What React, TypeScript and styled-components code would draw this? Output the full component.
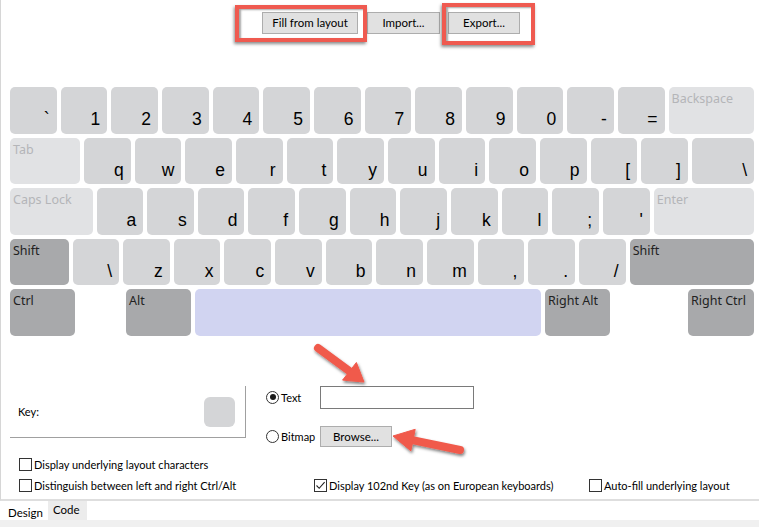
import React from "react";
import styled, { createGlobalStyle, css } from "styled-components";

const Global = createGlobalStyle`
  html, body { margin: 0; padding: 0; background: #ffffff; }
  body { font-family: "Noto Sans", "Open Sans", sans-serif; }
`;

const UI_FONT = `Lato, "Noto Sans", sans-serif`;
const KEY_FONT = `"Noto Sans", "Open Sans", sans-serif`;

const Page = styled.div`
  position: relative;
  width: 759px;
  height: 527px;
  overflow: hidden;
  background: #ffffff;
  display: flex;
  flex-direction: column;
  font-family: ${UI_FONT};
  color: #000;
`;

const Content = styled.div`
  height: 501px;
  border-left: 1px solid #d6d6d6;
  border-bottom: 2px solid #dedede;
  box-sizing: border-box;
  display: flex;
  flex-direction: column;
`;

const Toolbar = styled.div`
  display: flex;
  align-items: flex-start;
  padding: 12px 0 0 261px;
  height: 34px;
  box-sizing: border-box;
`;

const Button = styled.button<{ $w: number; $gap?: number }>`
  width: ${(p) => p.$w}px;
  height: 22px;
  margin-left: ${(p) => p.$gap ?? 0}px;
  background: #e1e1e1;
  border: 1px solid #adadad;
  font-family: ${UI_FONT};
  font-size: 11.5px;
  color: #000;
  padding: 0;
  line-height: 20px;
`;

const Keyboard = styled.div`
  margin-top: 53px;
  padding-left: 9px;
  width: 744px;
  display: flex;
  flex-direction: column;
  gap: 4px;
`;

const Row = styled.div`
  display: flex;
  gap: 4px;
  height: 46.5px;
`;

type Kind = "char" | "special" | "mod" | "space" | "gap";

const Key = styled.div<{ $kind: Kind; $w?: number }>`
  ${(p) => (p.$w ? css`width: ${p.$w}px; flex: none;` : css`flex: 1; min-width: 0;`)}
  border-radius: 5px;
  box-sizing: border-box;
  display: flex;
  flex-direction: column;
  ${(p) =>
    p.$kind === "char"
      ? css`
          background: #d4d5d7;
          justify-content: flex-end;
          align-items: flex-end;
          padding: 0 7px 5px 0;
          font-family: "Liberation Sans", Arial, sans-serif;
          font-size: 17.5px;
          line-height: 1;
          color: #000;
        `
      : css`
          justify-content: flex-start;
          align-items: flex-start;
          padding: 4px 0 0 3px;
          font-family: ${KEY_FONT};
          font-size: 12.5px;
          line-height: 16px;
        `}
  ${(p) => p.$kind === "special" && css`background: #e1e2e4; color: #b4b5b8;`}
  ${(p) => p.$kind === "mod" && css`background: #a8a9ab; color: #222;`}
  ${(p) => p.$kind === "space" && css`background: #d1d4f1;`}
  ${(p) => p.$kind === "gap" && css`background: transparent;`}
`;

const U = 46.67;

type K = { l: string; k: Kind; w?: number };
const chars = (s: string): K[] => s.split("").map((c) => ({ l: c, k: "char", w: U }));

const rows: K[][] = [
  [...chars("`1234567890-="), { l: "Backspace", k: "special" }],
  [{ l: "Tab", k: "special", w: 70 }, ...chars("qwertyuiop[]"), { l: "\\", k: "char" }],
  [{ l: "Caps Lock", k: "special", w: 82.5 }, ...chars("asdfghjkl;'"), { l: "Enter", k: "special" }],
  [{ l: "Shift", k: "mod", w: 58.5 }, ...chars("\\zxcvbnm,./"), { l: "Shift", k: "mod" }],
  [
    { l: "Ctrl", k: "mod", w: 65 },
    { l: "", k: "gap", w: 43 },
    { l: "Alt", k: "mod", w: 65 },
    { l: "", k: "space", w: 346 },
    { l: "Right Alt", k: "mod", w: 65 },
    { l: "", k: "gap", w: 70 },
    { l: "Right Ctrl", k: "mod" },
  ],
];

const Lower = styled.div`
  display: flex;
  margin-top: 50px;
  padding-left: 9px;
`;

const KeyBox = styled.div`
  width: 236px;
  height: 52px;
  box-sizing: border-box;
  border-right: 1px solid #a0a0a0;
  border-bottom: 1px solid #a0a0a0;
  display: flex;
  align-items: center;
  justify-content: space-between;
  padding: 0 10px 0 8px;
`;

const Label = styled.span`
  font-family: ${UI_FONT};
  font-size: 11px;
  color: #000;
  white-space: nowrap;
`;

const KeySwatch = styled.div`
  width: 31px;
  height: 30px;
  border-radius: 6px;
  background: #d4d5d7;
  margin-top: 1px;
`;

const Options = styled.div`
  margin-left: 20px;
  display: grid;
  grid-template-columns: 54px auto;
  grid-template-rows: 23px 21px;
  row-gap: 17px;
  align-items: center;
`;

const RadioLabel = styled.label`
  display: flex;
  align-items: center;
  gap: 2px;
`;

const Radio = styled.span<{ $on?: boolean }>`
  width: 11px;
  height: 11px;
  border: 1px solid #333;
  border-radius: 50%;
  display: flex;
  align-items: center;
  justify-content: center;
  background: #fff;
  &::after {
    content: "";
    width: 6px;
    height: 6px;
    border-radius: 50%;
    background: ${(p) => (p.$on ? "#1a1a1a" : "transparent")};
  }
`;

const TextInput = styled.div`
  width: 154px;
  height: 23px;
  box-sizing: border-box;
  border: 1px solid #7a7a7a;
  background: #fff;
`;

const Browse = styled(Button)`
  height: 21px;
  line-height: 19px;
`;

const Checks = styled.div`
  display: grid;
  grid-template-columns: 295px 275px auto;
  grid-template-rows: 13px 13px;
  row-gap: 8px;
  padding-left: 18px;
  margin-top: 11px;
`;

const CheckItem = styled.label<{ $col: number; $row: number }>`
  grid-column: ${(p) => p.$col};
  grid-row: ${(p) => p.$row};
  display: flex;
  align-items: center;
  gap: 2px;
  height: 13px;
`;

const Box = styled.span`
  width: 13px;
  height: 13px;
  box-sizing: border-box;
  border: 1px solid #333;
  background: #fff;
  display: flex;
  align-items: center;
  justify-content: center;
  flex: none;
`;

const Tabs = styled.div`
  display: flex;
  height: 19px;
`;

const Tab = styled.div<{ $active?: boolean }>`
  height: 19px;
  padding: ${(p) => (p.$active ? "0 0 0 8px" : "0 0 0 5px")};
  width: ${(p) => (p.$active ? "48px" : "39px")};
  box-sizing: border-box;
  background: ${(p) => (p.$active ? "#ffffff" : "#ececec")};
  font-family: ${UI_FONT};
  font-size: 11.5px;
  line-height: ${(p) => (p.$active ? "23px" : "17px")};
`;

const Strip = styled.div`
  flex: 1;
  background: #f0f0f0;
`;

const Highlight = styled.div<{ $x: number; $y: number; $w: number; $h: number }>`
  position: absolute;
  left: ${(p) => p.$x}px;
  top: ${(p) => p.$y}px;
  width: ${(p) => p.$w}px;
  height: ${(p) => p.$h}px;
  box-sizing: border-box;
  border: 4px solid #ef5a50;
  box-shadow: -1px 2px 3px rgba(0, 0, 0, 0.45), inset 2px 1px 2px rgba(0, 0, 0, 0.35);
  pointer-events: none;
`;

const Overlay = styled.svg`
  position: absolute;
  left: 0;
  top: 0;
  pointer-events: none;
`;

function Check({ col, row, on, children }: { col: number; row: number; on?: boolean; children: React.ReactNode }) {
  return (
    <CheckItem $col={col} $row={row}>
      <Box>
        {on && (
          <svg width="11" height="11" viewBox="0 0 11 11">
            <path d="M1.5 5.5 L4.2 8.3 L9.6 2.2" fill="none" stroke="#222" strokeWidth="1.1" />
          </svg>
        )}
      </Box>
      <Label>{children}</Label>
    </CheckItem>
  );
}

export default function App() {
  return (
    <Page>
      <Global />
      <Content>
        <Toolbar>
          <Button $w={96}>Fill from layout</Button>
          <Button $w={73} $gap={9}>Import...</Button>
          <Button $w={72} $gap={8}>Export...</Button>
        </Toolbar>
        <Keyboard>
          {rows.map((r, i) => (
            <Row key={i}>
              {r.map((k, j) => (
                <Key key={j} $kind={k.k} $w={k.w}>
                  {k.l}
                </Key>
              ))}
            </Row>
          ))}
        </Keyboard>
        <Lower>
          <KeyBox>
            <Label>Key:</Label>
            <KeySwatch />
          </KeyBox>
          <Options>
            <RadioLabel>
              <Radio $on />
              <Label>Text</Label>
            </RadioLabel>
            <TextInput />
            <RadioLabel>
              <Radio />
              <Label>Bitmap</Label>
            </RadioLabel>
            <Browse $w={72}>Browse...</Browse>
          </Options>
        </Lower>
        <Checks>
          <Check col={1} row={1}>Display underlying layout characters</Check>
          <Check col={1} row={2}>Distinguish between left and right Ctrl/Alt</Check>
          <Check col={2} row={2} on>Display 102nd Key (as on European keyboards)</Check>
          <Check col={3} row={2}>Auto-fill underlying layout</Check>
        </Checks>
      </Content>
      <Tabs>
        <Tab $active>Design</Tab>
        <Tab>Code</Tab>
      </Tabs>
      <Strip />

      <Highlight $x={235} $y={5} $w={132} $h={37} />
      <Highlight $x={442} $y={3} $w={93} $h={42} />

      <Overlay width="759" height="527" viewBox="0 0 759 527">
        <defs>
          <filter id="sh" x="-20%" y="-20%" width="140%" height="140%">
            <feDropShadow dx="1" dy="2" stdDeviation="1.6" floodColor="#000" floodOpacity="0.5" />
          </filter>
        </defs>
        <g filter="url(#sh)" fill="#f05a4c" stroke="#f05a4c">
          <line x1="318" y1="348" x2="352" y2="373" strokeWidth="8" strokeLinecap="round" />
          <polygon points="364,382 342.6,380.1 356.4,362.5" strokeWidth="1" strokeLinejoin="round" />
          <line x1="460" y1="450" x2="410" y2="439.6" strokeWidth="8" strokeLinecap="round" />
          <polygon points="393,436 415.2,429.3 410.9,450.9" strokeWidth="1" strokeLinejoin="round" />
        </g>
      </Overlay>
    </Page>
  );
}
